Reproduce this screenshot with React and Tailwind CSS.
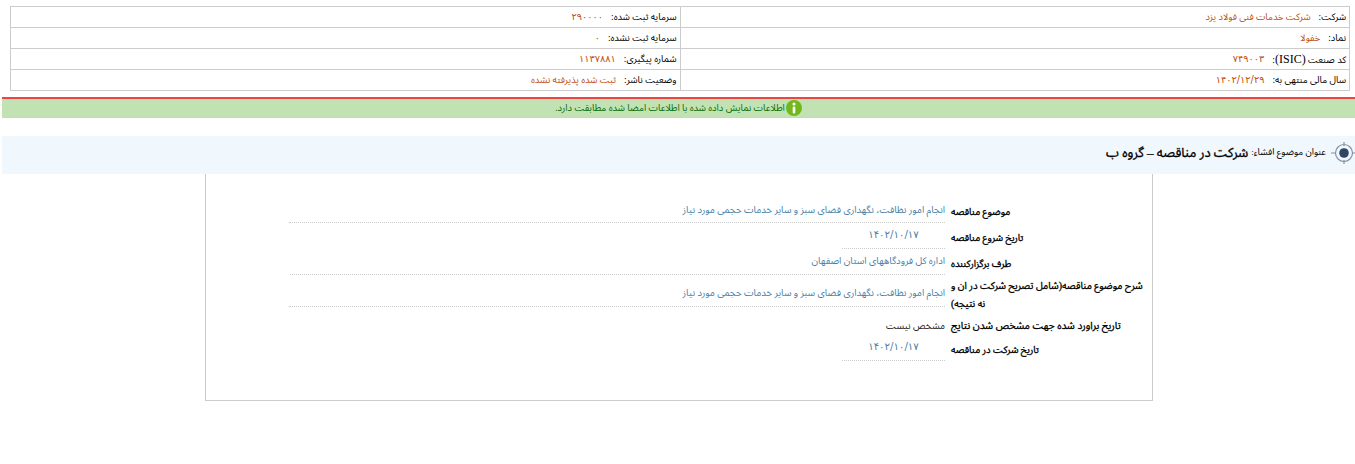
import React from 'react'

const font = "font-['Liberation_Serif','Noto_Sans_Arabic','Noto_Naskh_Arabic','DejaVu_Sans',sans-serif]"
const digits = "font-['DejaVu_Sans',sans-serif]"

const infoRows = [
  ['شرکت:', 'شرکت خدمات فنی فولاد یزد', 'سرمایه ثبت شده:', '۲۹۰۰۰۰'],
  ['نماد:', 'خفولا', 'سرمایه ثبت نشده:', '۰'],
  [<>کد صنعت <span className="text-[12px]">(ISIC)</span>:</>, '۷۴۹۰۰۳', 'شماره پیگیری:', '۱۱۳۷۸۸۱'],
  ['سال مالی منتهی به:', '۱۴۰۲/۱۲/۲۹', 'وضعیت ناشر:', 'ثبت شده پذیرفته نشده'],
]

const subject = 'انجام امور نظافت، نگهداری فضای سبز و سایر خدمات حجمی مورد نیاز'
const bold = '[-webkit-text-stroke:0.3px_black]'
const dateValue = `pt-[4px] text-[10.2px] text-[#4a7fa8] ${digits}`

function InfoCell({ label, value, right }) {
  const isNumber = /^[۰-۹/]+$/.test(value)
  return (
    <div className={`flex-1 flex items-center px-[3px] text-[9.4px] text-black ${right ? 'border-l border-[#cccccc]' : ''}`}>
      <span>{label}</span>
      <span className={`mr-2 text-[#c2500f] ${isNumber ? `text-[9.8px] ${digits}` : ''}`}>{value}</span>
    </div>
  )
}

function Row({ label, value, h, width, center, line = true, labelClass = 'pt-[6px] text-[9.6px]', valueClass = 'pt-[5px] text-[9.6px] text-[#4a7fa8]' }) {
  return (
    <div className={`flex items-start ${h}`}>
      <div className={`w-[195px] shrink-0 text-left text-black leading-[18px] ${bold} ${labelClass}`}>{label}</div>
      <div className={`${width} mr-[6px] h-full leading-[16px] ${center ? 'text-center' : ''} ${valueClass} ${line ? 'border-b border-dotted border-[#cccccc]' : ''}`}>
        {value}
      </div>
    </div>
  )
}

export default function App() {
  return (
    <div dir="rtl" className={`w-[1355px] h-[464px] bg-white overflow-hidden ${font}`}>
      <div className="pt-[6px] pr-[5px] pl-[10px]">
        <div className="border border-[#cccccc]">
          {infoRows.map((r, i) => (
            <div key={i} className={`flex ${i > 0 ? 'h-[21px] border-t border-[#cccccc]' : 'h-[20px]'}`}>
              <InfoCell label={r[0]} value={r[1]} right />
              <InfoCell label={r[2]} value={r[3]} />
            </div>
          ))}
        </div>
      </div>

      <div className="mt-[6px] ml-[2px] border-t-2 border-[#ef4444] bg-[#c2e2b4] h-[21px] border-b border-b-[#c8d8c0] flex items-center justify-center gap-[1px]">
        <svg width="16" height="16" viewBox="0 0 16 16" className="shrink-0">
          <circle cx="8" cy="8" r="8" fill="#72b81a" />
          <circle cx="8" cy="4" r="1.6" fill="#ffffff" />
          <rect x="6.7" y="6.5" width="2.6" height="7" rx="1" fill="#ffffff" />
        </svg>
        <span className="text-[9.45px] text-[#0a6b0a]">اطلاعات نمایش داده شده با اطلاعات امضا شده مطابقت دارد.</span>
      </div>

      <div className="mt-[18px] ml-[2px] h-[38px] bg-[#f0f7fd] flex items-center pb-[4px] overflow-hidden">
        <svg width="26" height="26" viewBox="0 0 26 26" className="shrink-0 -mr-[2px]">
          <circle cx="13" cy="13" r="8.5" fill="none" stroke="#8492a3" strokeWidth="1.2" />
          <circle cx="13" cy="13" r="4.8" fill="#2f4763" />
          <path d="M13 2v4M13 20v4M0 13h5M21 13h5" stroke="#8492a3" strokeWidth="1.2" />
        </svg>
        <span className="mr-[5px] text-[9.2px] text-black">عنوان موضوع افشاء:</span>
        <span className={`mr-[3px] text-[13px] text-black ${bold}`}>شرکت در مناقصه – گروه ب</span>
      </div>

      <div className="mr-[202px] w-[948px] h-[227px] border-x border-b border-[#cccccc] pt-[23px] pr-[6px]">
        <Row label="موضوع مناقصه" value={subject} h="h-[26px]" width="w-[656px]" />
        <Row label="تاریخ شروع مناقصه" value="۱۴۰۲/۱۰/۱۷" h="h-[26px]" width="w-[103px]" center valueClass={dateValue} />
        <Row label="طرف برگزارکننده" value="اداره کل فرودگاههای استان اصفهان" h="h-[26px]" width="w-[655px]" valueClass="pt-[4px] text-[9.6px] text-[#4a7fa8]" />
        <Row label={<>شرح موضوع مناقصه(شامل تصریح شرکت در ان و<br />نه نتیجه)</>} value={subject} h="h-[32px]" width="w-[656px]" labelClass="pt-[2px] text-[9.8px]" valueClass="pt-[10px] text-[9.6px] text-[#4a7fa8]" />
        <div className="h-[10px]" />
        <Row label="تاریخ براورد شده جهت مشخص شدن نتایج" value="مشخص نیست" h="h-[18px]" width="w-[656px]" line={false} labelClass="text-[10.2px]" valueClass="pt-[1px] text-[9.5px] text-[#222222]" />
        <Row label="تاریخ شرکت در مناقصه" value="۱۴۰۲/۱۰/۱۷" h="h-[26px]" width="w-[103px]" center valueClass={dateValue} />
      </div>
    </div>
  )
}
